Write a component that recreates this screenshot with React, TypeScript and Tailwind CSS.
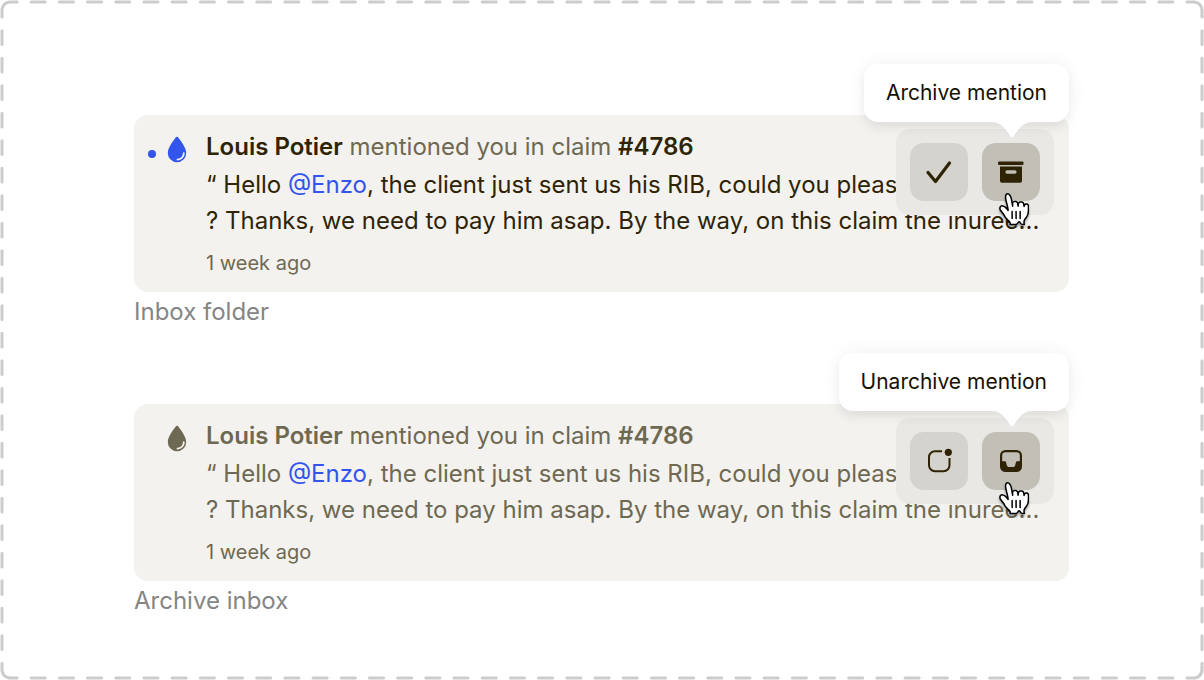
import React from "react"
import clsx from "clsx"

type Mention = {
  id: string
  author: string
  claim: string
  caption: string
  tooltip: string
  archived: boolean
}

const mentions: Mention[] = [
  {
    id: "inbox",
    author: "Louis Potier",
    claim: "#4786",
    caption: "Inbox folder",
    tooltip: "Archive mention",
    archived: false,
  },
  {
    id: "archive",
    author: "Louis Potier",
    claim: "#4786",
    caption: "Archive inbox",
    tooltip: "Unarchive mention",
    archived: true,
  },
]

function DropIcon() {
  return (
    <svg viewBox="0 0 20 27" className="h-[27px] w-5" aria-hidden="true">
      <path
        d="M10 .8c.5 0 .9.3 1.300.8C13.800 5 19.200 11.800 19.200 17A9.200 9.200 0 0 1 .8 17C.8 11.800 6.200 5 8.700 1.600 9.100 1.100 9.500.8 10 .8Z"
        fill="currentColor"
      />
      <path d="M16.800 17.200c0 3.400-2.700 6-6.300 6.500" fill="none" stroke="#f4f2ee" strokeWidth="1.800" strokeLinecap="round" />
    </svg>
  )
}

function CheckIcon() {
  return (
    <svg viewBox="0 0 28 28" className="size-7" aria-hidden="true">
      <path d="m3 14.500 7.500 9L24.500 5" fill="none" stroke="currentColor" strokeWidth="3.200" strokeLinecap="round" strokeLinejoin="round" />
    </svg>
  )
}

function ArchiveIcon() {
  return (
    <svg viewBox="0 0 28 28" className="size-7" aria-hidden="true">
      <rect x="1" y="3.500" width="25.500" height="3.500" rx="1" fill="currentColor" />
      <path
        fillRule="evenodd"
        d="M3 8.500h22V23a1.800 1.800 0 0 1-1.800 1.800H4.800A1.800 1.800 0 0 1 3 23V8.500Zm7.200 3.700a1.800 1.800 0 0 0 0 3.600h7.600a1.800 1.800 0 0 0 0-3.600h-7.600Z"
        fill="currentColor"
      />
    </svg>
  )
}

function UnreadIcon() {
  return (
    <svg viewBox="0 0 28 28" className="size-7" aria-hidden="true">
      <path
        d="M17 4.200H10a6 6 0 0 0-6 6v8a6 6 0 0 0 6 6h8.500a6 6 0 0 0 6-6V11"
        fill="none"
        stroke="currentColor"
        strokeWidth="2"
      />
      <circle cx="23.300" cy="5.300" r="3.600" fill="currentColor" />
    </svg>
  )
}

function InboxIcon() {
  return (
    <svg viewBox="0 0 28 28" className="size-7" aria-hidden="true">
      <path
        fillRule="evenodd"
        d="M8.500 3h11A5.500 5.500 0 0 1 25 8.500v11a5.500 5.500 0 0 1-5.500 5.500h-11A5.500 5.500 0 0 1 3 19.500v-11A5.500 5.500 0 0 1 8.500 3Zm0 2.200a3.300 3.300 0 0 0-3.300 3.300v5.800h2.300c1 0 1.500.5 1.700 1.400l.6 2.500c.3 1.100 1 1.800 2.200 1.800h4c1.200 0 1.900-.7 2.200-1.800l.6-2.500c.2-.9.7-1.400 1.700-1.400h2.300v-5.800a3.300 3.300 0 0 0-3.300-3.300h-11Z"
        fill="currentColor"
      />
    </svg>
  )
}

function HandCursor() {
  return (
    <svg
      viewBox="9 9 16 17"
      className="pointer-events-none absolute top-[50px] left-[15px] z-30 h-[34px] w-8 drop-shadow-[0_2px_1px_rgba(0,0,0,0.35)]"
      aria-hidden="true"
    >
      <path
        d="m13.3315 21.3799c-.284-.359-.629-1.093-1.243-1.984-.348-.504-1.211-1.453-1.468-1.935-.223-.426-.199-.617-.146-.97.094-.628.738-1.117 1.425-1.051.519.049.959.392 1.355.716.239.195.533.574.71.788.163.196.203.277.377.509.23.307.302.459.214.121-.071-.496-.187-1.343-.355-2.092-.128-.568-.159-.657-.281-1.093-.129-.464-.195-.789-.316-1.281-.084-.348-.235-1.059-.276-1.459-.057-.547-.087-1.439.264-1.849.275-.321.906-.418 1.297-.22.512.259.803 1.003.936 1.300.239.534.387 1.151.516 1.961.164 1.031.466 2.462.476 2.763.024-.369-.068-1.146-.004-1.500.058-.321.328-.694.666-.795.286-.085.621-.116.916-.055.313.064.643.288.766.499.362.624.369 1.899.384 1.831.086-.376.071-1.229.284-1.584.14-.234.497-.445.687-.479.294-.052.655-.068.964-.008.249.049.586.345.677.487.218.344.342 1.317.379 1.658.015.141.074-.392.293-.736.406-.639 1.843-.763 1.898.639.025.654.02.624.02 1.064 0 .517-.012.828-.04 1.202-.031.4-.117 1.304-.242 1.742-.086.301-.371.978-.652 1.384 0 0-1.074 1.250-1.191 1.813-.118.562-.079.566-.102.965-.023.398.121.922.121.922s-.802.104-1.234.035c-.391-.063-.875-.841-1-1.079-.172-.328-.539-.265-.682-.023-.225.383-.709 1.070-1.051 1.113-.668.084-2.054.031-3.139.02 0 0 .185-1.011-.227-1.358-.305-.259-.83-.784-1.144-1.060z"
        fill="white"
        stroke="black"
        strokeWidth=".75"
        strokeLinejoin="round"
      />
      <path d="M20.566 21.734v-3.459M18.551 21.746l-.016-3.473M16.555 18.305l.021 3.426" stroke="black" strokeWidth=".75" strokeLinecap="round" />
    </svg>
  )
}

function Tooltip({ label }: { label: string }) {
  return (
    <div
      role="tooltip"
      className="absolute -top-[51px] right-0 z-20 rounded-[14px] bg-white px-[22px] py-[15px] text-[21px] leading-7 whitespace-nowrap text-[#151103] shadow-[0_6px_10px_rgba(0,0,0,0.05),0_0_20px_rgba(20,20,80,0.06)]"
    >
      {label}
      <svg viewBox="0 0 42 16" className="absolute top-full right-9 h-4 w-[42px]" aria-hidden="true">
        <path d="M0 0c8 0 12 4 15 8l4.600 6.500a1.700 1.700 0 0 0 2.800 0L27 8c3-4 7-8 15-8Z" fill="white" />
      </svg>
    </div>
  )
}

function MentionCard({ mention }: { mention: Mention }) {
  const { archived } = mention

  return (
    <figure>
      <article className={clsx("relative flex rounded-[14px] bg-[#f4f2ee] pt-3 pb-[11px]", archived ? "text-[#6e6952]" : "text-[#2e2405]")}>
        <div className="flex h-9 w-[72px] shrink-0 items-end gap-[11px] pl-[14px]">
          <span className={clsx("mb-[5px] size-2 rounded-full", !archived && "bg-[#3355ee]")} />
          <span className={archived ? "text-[#6e6952]" : "text-[#3355ee]"}>
            <DropIcon />
          </span>
        </div>

        <div className="min-w-0 flex-1 text-2xl leading-9 whitespace-nowrap">
          <h2 className="leading-10">
            <span className="font-semibold">{mention.author}</span>{" "}
            <span className="text-[#6e6952]">mentioned you in claim</span>{" "}
            <span className="font-semibold">{mention.claim}</span>
          </h2>
          <p className="overflow-hidden leading-9">
            “ Hello <a href="#enzo" className="text-[#3355ee]">@Enzo</a>, the client just sent us his RIB, could you please
            <br />
            ? Thanks, we need to pay him asap. By the way, on this claim the inuree...
          </p>
          <p className="pt-[6px] text-xl leading-9 text-[#6e6952]">1 week ago</p>
        </div>

        <div className="absolute top-[14px] right-[15px] z-10 flex gap-[14px] rounded-[14px] bg-[#e9e8e5] p-[14px] text-[#2e2405]">
          <button type="button" aria-label={archived ? "Mark as unread" : "Mark as done"} className="flex size-[58px] items-center justify-center rounded-[14px] bg-[#d5d3ce]">
            {archived ? <UnreadIcon /> : <CheckIcon />}
          </button>
          <div className="relative">
            <button type="button" aria-label={mention.tooltip} className="flex size-[58px] items-center justify-center rounded-[14px] bg-[#c2bfb7]">
              {archived ? <InboxIcon /> : <ArchiveIcon />}
            </button>
            <HandCursor />
          </div>
        </div>

        <Tooltip label={mention.tooltip} />
      </article>
      <figcaption className="pt-[2px] text-2xl leading-9 text-[#858585]">{mention.caption}</figcaption>
    </figure>
  )
}

function DashedFrame() {
  const corners = ["top-0 left-0", "top-0 right-0 rotate-90", "right-0 bottom-0 rotate-180", "bottom-0 left-0 -rotate-90"]
  const rows = ["top-0", "bottom-0"]
  const columns = ["left-0", "right-0"]

  return (
    <div className="pointer-events-none absolute inset-0 text-[#cccccc]" aria-hidden="true">
      {corners.map((corner) => (
        <svg key={corner} viewBox="0 0 10 10" className={clsx("absolute size-[10px]", corner)}>
          <path d="M2 10a8 8 0 0 1 8-8" fill="none" stroke="currentColor" strokeWidth="3" />
        </svg>
      ))}
      {rows.map((side) => (
        <div key={side} className={clsx("absolute inset-x-[10px] h-1", side)}>
          <svg className="block h-1 w-full overflow-visible">
            <line x1="0" y1="2" x2="100%" y2="2" pathLength={1176} stroke="currentColor" strokeWidth="3" strokeLinecap="round" strokeDasharray="14 14" strokeDashoffset="7" />
          </svg>
        </div>
      ))}
      {columns.map((side) => (
        <div key={side} className={clsx("absolute inset-y-[10px] w-1", side)}>
          <svg className="block h-full w-1 overflow-visible">
            <line x1="2" y1="0" x2="2" y2="100%" pathLength={672} stroke="currentColor" strokeWidth="3" strokeLinecap="round" strokeDasharray="14 14" strokeDashoffset="7" />
          </svg>
        </div>
      ))}
    </div>
  )
}

export default function App() {
  return (
    <main className="relative flex min-h-screen flex-col gap-[74px] bg-white pt-[115px] pr-[135px] pb-10 pl-[134px] font-['Inter',sans-serif]">
      <DashedFrame />
      {mentions.map((mention) => (
        <MentionCard key={mention.id} mention={mention} />
      ))}
    </main>
  )
}
